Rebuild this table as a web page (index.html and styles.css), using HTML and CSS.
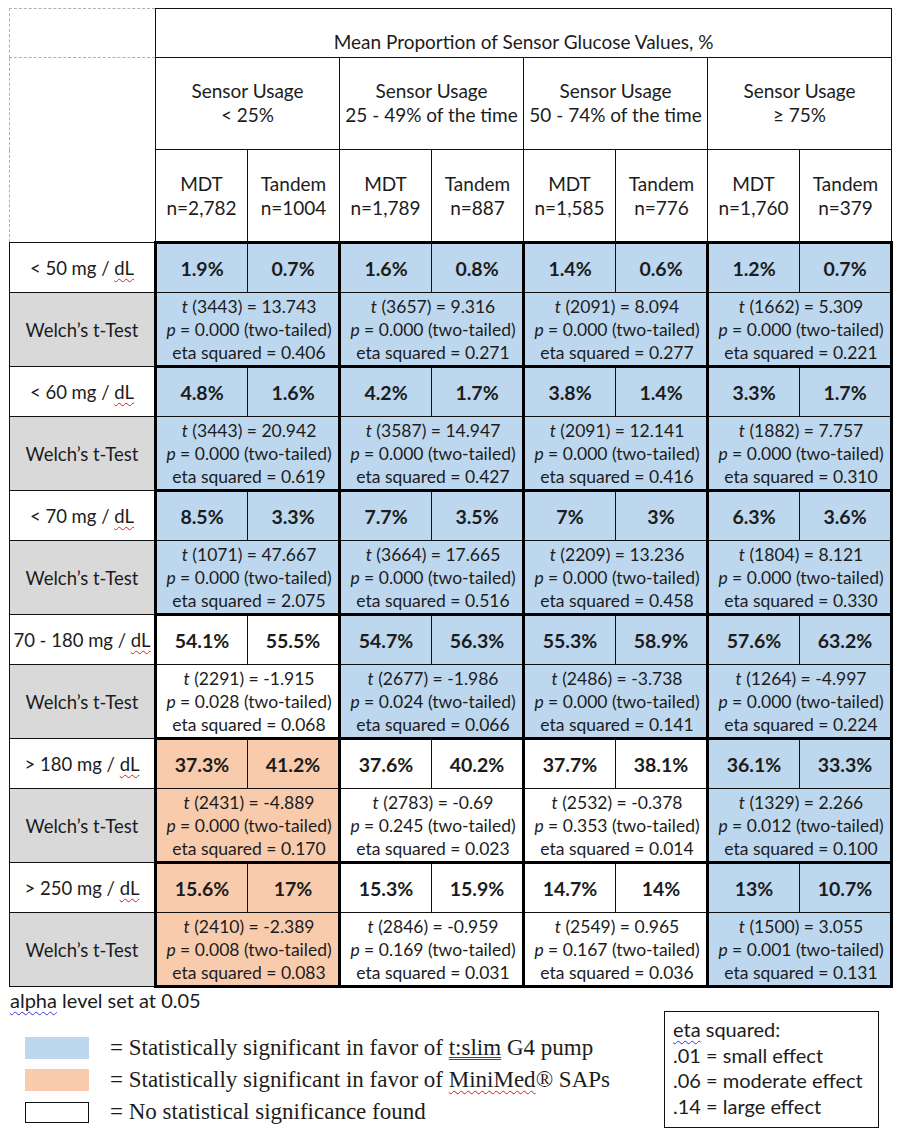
FILE: index.html
```html
<!DOCTYPE html>
<html lang="en">
<head>
<meta charset="utf-8">
<title>Mean Proportion of Sensor Glucose Values</title>
<link rel="stylesheet" href="styles.css">
</head>
<body>
<table class="grid">
  <colgroup>
    <col class="c-label">
    <col class="c-sub"><col class="c-sub"><col class="c-sub"><col class="c-sub">
    <col class="c-sub"><col class="c-sub"><col class="c-sub"><col class="c-sub">
  </colgroup>
  <thead>
    <tr class="h1">
      <td class="corner-top"></td>
      <th colspan="8" class="title">Mean Proportion of Sensor Glucose Values, %</th>
    </tr>
    <tr class="h2">
      <td class="corner-bottom" rowspan="2"></td>
      <th colspan="2">Sensor Usage<br>&lt; 25%</th>
      <th colspan="2">Sensor Usage<br>25 - 49% of the time</th>
      <th colspan="2">Sensor Usage<br>50 - 74% of the time</th>
      <th colspan="2">Sensor Usage<br>≥ 75%</th>
    </tr>
    <tr class="h3">
      <th>MDT<br>n=2,782</th><th>Tandem<br>n=1004</th>
      <th>MDT<br>n=1,789</th><th>Tandem<br>n=887</th>
      <th>MDT<br>n=1,585</th><th>Tandem<br>n=776</th>
      <th>MDT<br>n=1,760</th><th>Tandem<br>n=379</th>
    </tr>
  </thead>
  <tbody>
    <tr class="val">
      <td class="label">&lt; 50 mg / <span class="sp-red">dL</span></td>
      <td class="b">1.9%</td><td class="b">0.7%</td>
      <td class="b">1.6%</td><td class="b">0.8%</td>
      <td class="b">1.4%</td><td class="b">0.6%</td>
      <td class="b">1.2%</td><td class="b">0.7%</td>
    </tr>
    <tr class="welch">
      <td class="label gray">Welch’s t-Test</td>
      <td colspan="2" class="b"><i>t</i> (3443) = 13.743<br><i>p</i> = 0.000 (two-tailed)<br>eta squared = 0.406</td>
      <td colspan="2" class="b"><i>t</i> (3657) = 9.316<br><i>p</i> = 0.000 (two-tailed)<br>eta squared = 0.271</td>
      <td colspan="2" class="b"><i>t</i> (2091) = 8.094<br><i>p</i> = 0.000 (two-tailed)<br>eta squared = 0.277</td>
      <td colspan="2" class="b"><i>t</i> (1662) = 5.309<br><i>p</i> = 0.000 (two-tailed)<br>eta squared = 0.221</td>
    </tr>
    <tr class="val">
      <td class="label">&lt; 60 mg / <span class="sp-red">dL</span></td>
      <td class="b">4.8%</td><td class="b">1.6%</td>
      <td class="b">4.2%</td><td class="b">1.7%</td>
      <td class="b">3.8%</td><td class="b">1.4%</td>
      <td class="b">3.3%</td><td class="b">1.7%</td>
    </tr>
    <tr class="welch">
      <td class="label gray">Welch’s t-Test</td>
      <td colspan="2" class="b"><i>t</i> (3443) = 20.942<br><i>p</i> = 0.000 (two-tailed)<br>eta squared = 0.619</td>
      <td colspan="2" class="b"><i>t</i> (3587) = 14.947<br><i>p</i> = 0.000 (two-tailed)<br>eta squared = 0.427</td>
      <td colspan="2" class="b"><i>t</i> (2091) = 12.141<br><i>p</i> = 0.000 (two-tailed)<br>eta squared = 0.416</td>
      <td colspan="2" class="b"><i>t</i> (1882) = 7.757<br><i>p</i> = 0.000 (two-tailed)<br>eta squared = 0.310</td>
    </tr>
    <tr class="val">
      <td class="label">&lt; 70 mg / <span class="sp-red">dL</span></td>
      <td class="b">8.5%</td><td class="b">3.3%</td>
      <td class="b">7.7%</td><td class="b">3.5%</td>
      <td class="b">7%</td><td class="b">3%</td>
      <td class="b">6.3%</td><td class="b">3.6%</td>
    </tr>
    <tr class="welch">
      <td class="label gray">Welch’s t-Test</td>
      <td colspan="2" class="b"><i>t</i> (1071) = 47.667<br><i>p</i> = 0.000 (two-tailed)<br>eta squared = 2.075</td>
      <td colspan="2" class="b"><i>t</i> (3664) = 17.665<br><i>p</i> = 0.000 (two-tailed)<br>eta squared = 0.516</td>
      <td colspan="2" class="b"><i>t</i> (2209) = 13.236<br><i>p</i> = 0.000 (two-tailed)<br>eta squared = 0.458</td>
      <td colspan="2" class="b"><i>t</i> (1804) = 8.121<br><i>p</i> = 0.000 (two-tailed)<br>eta squared = 0.330</td>
    </tr>
    <tr class="val">
      <td class="label">70 - 180 mg / <span class="sp-red">dL</span></td>
      <td class="w">54.1%</td><td class="w">55.5%</td>
      <td class="b">54.7%</td><td class="b">56.3%</td>
      <td class="b">55.3%</td><td class="b">58.9%</td>
      <td class="b">57.6%</td><td class="b">63.2%</td>
    </tr>
    <tr class="welch">
      <td class="label gray">Welch’s t-Test</td>
      <td colspan="2" class="w"><i>t</i> (2291) = -1.915<br><i>p</i> = 0.028 (two-tailed)<br>eta squared = 0.068</td>
      <td colspan="2" class="b"><i>t</i> (2677) = -1.986<br><i>p</i> = 0.024 (two-tailed)<br>eta squared = 0.066</td>
      <td colspan="2" class="b"><i>t</i> (2486) = -3.738<br><i>p</i> = 0.000 (two-tailed)<br>eta squared = 0.141</td>
      <td colspan="2" class="b"><i>t</i> (1264) = -4.997<br><i>p</i> = 0.000 (two-tailed)<br>eta squared = 0.224</td>
    </tr>
    <tr class="val">
      <td class="label">&gt; 180 mg / <span class="sp-red">dL</span></td>
      <td class="o">37.3%</td><td class="o">41.2%</td>
      <td class="w">37.6%</td><td class="w">40.2%</td>
      <td class="w">37.7%</td><td class="w">38.1%</td>
      <td class="b">36.1%</td><td class="b">33.3%</td>
    </tr>
    <tr class="welch">
      <td class="label gray">Welch’s t-Test</td>
      <td colspan="2" class="o"><i>t</i> (2431) = -4.889<br><i>p</i> = 0.000 (two-tailed)<br>eta squared = 0.170</td>
      <td colspan="2" class="w"><i>t</i> (2783) = -0.69<br><i>p</i> = 0.245 (two-tailed)<br>eta squared = 0.023</td>
      <td colspan="2" class="w"><i>t</i> (2532) = -0.378<br><i>p</i> = 0.353 (two-tailed)<br>eta squared = 0.014</td>
      <td colspan="2" class="b"><i>t</i> (1329) = 2.266<br><i>p</i> = 0.012 (two-tailed)<br>eta squared = 0.100</td>
    </tr>
    <tr class="val">
      <td class="label">&gt; 250 mg / <span class="sp-red">dL</span></td>
      <td class="o">15.6%</td><td class="o">17%</td>
      <td class="w">15.3%</td><td class="w">15.9%</td>
      <td class="w">14.7%</td><td class="w">14%</td>
      <td class="b">13%</td><td class="b">10.7%</td>
    </tr>
    <tr class="welch">
      <td class="label gray">Welch’s t-Test</td>
      <td colspan="2" class="o"><i>t</i> (2410) = -2.389<br><i>p</i> = 0.008 (two-tailed)<br>eta squared = 0.083</td>
      <td colspan="2" class="w"><i>t</i> (2846) = -0.959<br><i>p</i> = 0.169 (two-tailed)<br>eta squared = 0.031</td>
      <td colspan="2" class="w"><i>t</i> (2549) = 0.965<br><i>p</i> = 0.167 (two-tailed)<br>eta squared = 0.036</td>
      <td colspan="2" class="b"><i>t</i> (1500) = 3.055<br><i>p</i> = 0.001 (two-tailed)<br>eta squared = 0.131</td>
    </tr>
  </tbody>
</table>

<p class="alpha"><span class="sp-blue">alpha</span> level set at 0.05</p>

<div class="notes">
  <ul class="legend">
    <li><span class="swatch sw-blue"></span><span>= Statistically significant in favor of <span class="sp-blue2">t:slim</span> G4 pump</span></li>
    <li><span class="swatch sw-orange"></span><span>= Statistically significant in favor of <span class="sp-red">MiniMed</span>® SAPs</span></li>
    <li><span class="swatch sw-white"></span><span>= No statistical significance found</span></li>
  </ul>
  <div class="eta-box">
    <div><span class="sp-blue">eta</span> squared:</div>
    <div>.01 = small effect</div>
    <div>.06 = moderate effect</div>
    <div>.14 = large effect</div>
  </div>
</div>
</body>
</html>
```

FILE: styles.css
```css
html, body {
  background: #ffffff;
}
body {
  margin: 8px 0 0 9px;
  font-family: Lato, "Open Sans", sans-serif;
  color: #1c1c1c;
}

.grid {
  border-collapse: collapse;
  table-layout: fixed;
  width: 882px;
  font-size: 19px;
}
.c-label { width: 146px; }
.c-sub { width: 92px; }

.grid th,
.grid td {
  border: 1px solid #111;
  padding: 0;
  text-align: center;
  vertical-align: middle;
  font-weight: normal;
  white-space: nowrap;
}

.h1 { height: 49px; }
.h2 { height: 92px; }
.h3 { height: 93px; }
.h2 th, .h3 th { line-height: 24px; }
.h2 th { padding-bottom: 2px; }

.title {
  vertical-align: bottom !important;
  padding-bottom: 4px !important;
}

.grid td.corner-top {
  border: 1px dashed #b0b0b0;
  border-right: none;
}
.grid td.corner-bottom {
  border-left: 1px dashed #b0b0b0;
  border-top: none;
  border-bottom: none;
  border-right: none;
}

.grid td.label { font-size: 18.5px; }

.val { height: 50px; }
.welch { height: 74px; }
.welch td:not(.label) {
  font-size: 17.5px;
  line-height: 23px;
  padding-left: 3px;
}

.val td:not(.label) {
  font-weight: bold;
  font-size: 19.5px;
  border-top: 3px solid #000;
}
.val td:nth-child(even) { border-left: 3px solid #000; }
.val td:nth-child(odd):not(.label) { border-right: 3px solid #000; }

.welch td:not(.label) {
  border-bottom: 3px solid #000;
  border-left: 3px solid #000;
  border-right: 3px solid #000;
}

.label { background: #ffffff; }
.gray { background: #d9d9d9; }
.b { background: #bdd7ee; }
.o { background: #f8cbad; }
.w { background: #ffffff; }

.sp-red {
  text-decoration: underline wavy #d42020;
  text-decoration-thickness: 1px;
  text-underline-offset: 3px;
}
.sp-blue {
  text-decoration: underline wavy #3a3ad0;
  text-decoration-thickness: 1px;
  text-underline-offset: 3px;
}
.sp-blue2 {
  text-decoration: underline double #3a3ad0;
  text-decoration-thickness: 1px;
  text-underline-offset: 2px;
}

.alpha {
  margin: 1px 0 0 1px;
  font-size: 20px;
  line-height: 22px;
}

.notes {
  display: flex;
  align-items: flex-start;
  width: 870px;
}
.legend {
  list-style: none;
  margin: 21px 0 0 16px;
  padding: 0;
  font-family: "Liberation Serif", "Times New Roman", serif;
  font-size: 23px;
}
.legend li {
  display: flex;
  align-items: center;
  height: 32px;
}
.swatch {
  display: inline-block;
  width: 64px;
  height: 22px;
  margin-right: 21px;
  box-sizing: border-box;
  flex: none;
}
.sw-blue { background: #bdd7ee; }
.sw-orange { background: #f8cbad; }
.sw-white { background: #fff; border: 1px solid #111; height: 21px; }

.eta-box {
  margin-left: auto;
  margin-top: 0;
  width: 215px;
  height: 117px;
  box-sizing: border-box;
  border: 1px solid #111;
  padding: 5px 0 0 8px;
  font-size: 20px;
  line-height: 25.6px;
}
```
